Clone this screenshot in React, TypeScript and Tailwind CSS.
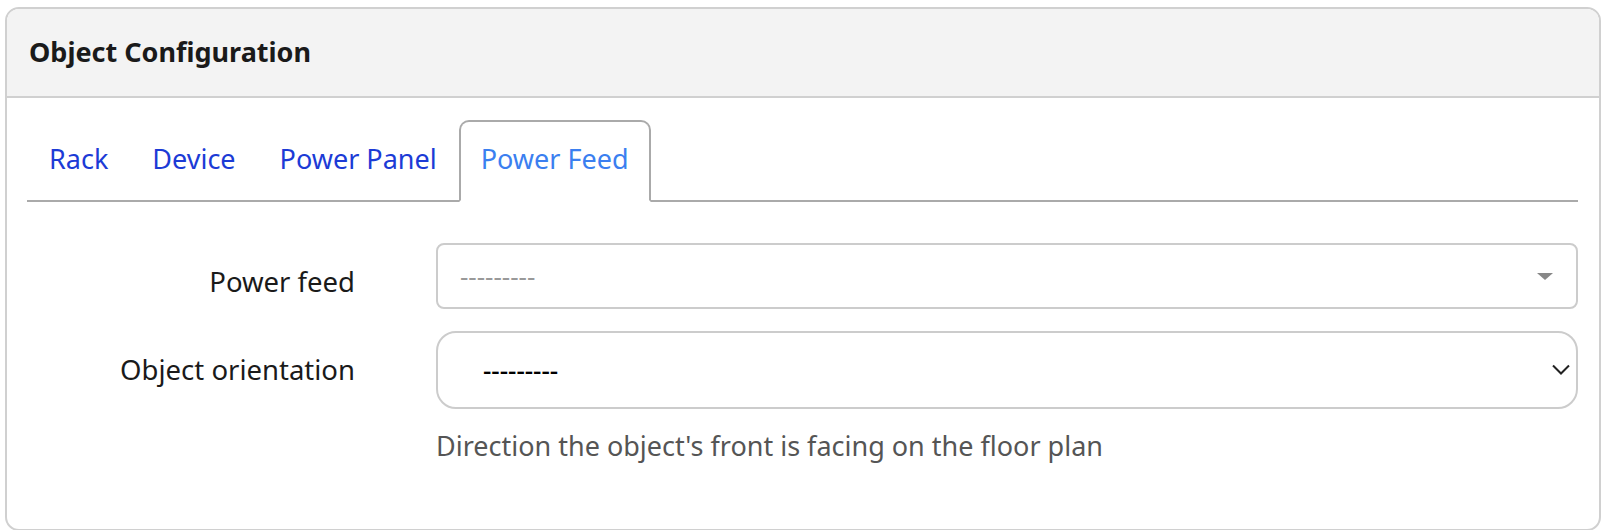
import { useState } from 'react'

const tabs = ['Rack', 'Device', 'Power Panel', 'Power Feed']

export default function App() {
  const [active, setActive] = useState('Power Feed')
  const [orientation, setOrientation] = useState('')

  return (
    <div className="min-h-[530px] bg-white pl-[5px] pt-[7px] font-['Noto_Sans',sans-serif]">
      <div className="w-[1596px] h-[524px] border-2 border-[#d0d0d0] rounded-[14px] overflow-hidden">
        {/* Header */}
        <div className="h-[89px] bg-[#f3f3f3] border-b-2 border-[#d0d0d0] flex items-center pl-[22px]">
          <h2 className="text-[27px] font-bold text-[#1a1a1a]">Object Configuration</h2>
        </div>

        <div className="pl-[20px] pr-[21px] pt-[22px]">
          {/* Tabs */}
          <ul className="flex border-b-2 border-[#aaaaaa]">
            {tabs.map((t) => (
              <li key={t} className="-mb-[2px]">
                <button
                  onClick={() => setActive(t)}
                  className={`h-[82px] px-[20px] pb-[4px] border-2 rounded-t-[10px] text-[27px] ${
                    active === t
                      ? 'border-[#aaaaaa] border-b-white bg-white text-[#3b7ff0]'
                      : 'border-transparent text-[#1c3bd6]'
                  }`}
                >
                  {t}
                </button>
              </li>
            ))}
          </ul>

          {/* Form */}
          <div className="mt-[41px] grid grid-cols-[328px_1fr] gap-x-[81px] gap-y-[22px] items-center">
            <label className="mt-[12px] text-right text-[27.5px] text-[#1a1a1a]">Power feed</label>
            <div className="h-[66px] border-2 border-[#cccccc] rounded-[8px] flex items-center justify-between pl-[22px] pr-[23px]">
              <span className="text-[26px] text-[#999999]">---------</span>
              <span className="w-0 h-0 border-l-[8px] border-r-[8px] border-t-[7px] border-l-transparent border-r-transparent border-t-[#888888]" />
            </div>

            <label htmlFor="orientation" className="text-right text-[27.5px] text-[#1a1a1a]">
              Object orientation
            </label>
            <div className="relative">
              <select
                id="orientation"
                value={orientation}
                onChange={(e) => setOrientation(e.target.value)}
                className="w-full h-[78px] appearance-none bg-white border-2 border-[#cccccc] rounded-[20px] pl-[45px] text-[26px] font-medium text-black outline-none"
              >
                <option value="">---------</option>
                <option value="up">Up</option>
                <option value="right">Right</option>
                <option value="down">Down</option>
                <option value="left">Left</option>
              </select>
              <svg
                className="absolute right-[8px] top-1/2 -translate-y-1/2 pointer-events-none"
                width="18" height="11" viewBox="0 0 18 11" fill="none"
              >
                <path d="M1 1l8 8 8-8" stroke="#222" strokeWidth="2" />
              </svg>
            </div>

            <div />
            <p className="-mt-[5px] text-[27px] text-[#555555]">
              Direction the object's front is facing on the floor plan
            </p>
          </div>
        </div>
      </div>
    </div>
  )
}
